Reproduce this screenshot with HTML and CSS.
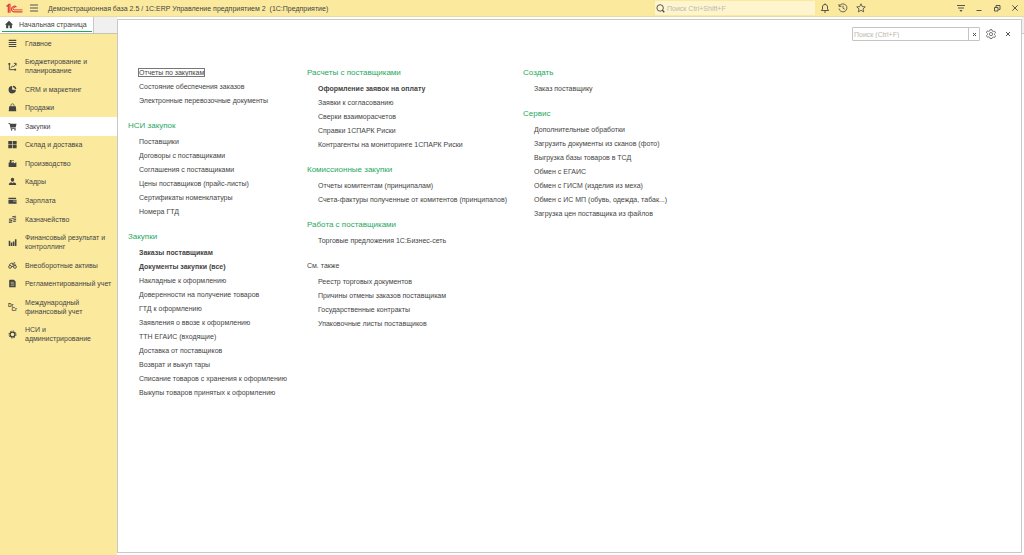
FILE: index.html
```html
<!DOCTYPE html>
<html lang="ru">
<head>
<meta charset="utf-8">
<title>1С:ERP Управление предприятием 2</title>
<link rel="stylesheet" href="styles.css">
</head>
<body>
<div class="app">
  <header class="titlebar">
    <svg class="logo" viewBox="0 0 16 10" fill="none" stroke="#e0403a" aria-label="1С"><path d="M.5 3.2 2.2 1.6V9M2.4 1.2h1.300V9" stroke-width="1.200"/><path d="M9.8 3.600A2.700 2.700 0 1 0 7.600 8.200H15.500" stroke-width="1.100"/><path d="M8.600 4.200A1.200 1.200 0 1 0 7.600 6.300H15.500" stroke-width=".9"/></svg>
    <button class="icon-btn menu-btn" aria-label="Меню"><svg viewBox="0 0 10 10" stroke="currentColor"><path d="M1 2h8M1 5h8M1 8h8"/></svg></button>
    <h1 class="title">Демонстрационная база 2.5 / 1С:ERP Управление предприятием 2&nbsp; (1С:Предприятие)</h1>
    <label class="global-search">
      <svg viewBox="0 0 10 10" fill="none" stroke="currentColor"><circle cx="4.6" cy="4.4" r="3.6"/><path d="m7 6.8 2.2 2.4" stroke-width="1.4"/></svg>
      <input type="text" placeholder="Поиск Ctrl+Shift+F" aria-label="Поиск">
    </label>
    <div class="tools">
      <button class="icon-btn" aria-label="Уведомления"><svg viewBox="0 0 10 10" fill="none" stroke="currentColor"><path d="M1.3 7.5h7.4L7.5 6V4C7.5 2.400 6.500 1.500 5 1.500S2.500 2.400 2.500 4v2zM5 .5v1M4 9h2"/></svg></button>
      <button class="icon-btn" aria-label="История"><svg viewBox="0 0 10 10" fill="none" stroke="currentColor" stroke-width=".9"><path d="M1.300 3.200A4 4 0 1 1 1 5.600M1 1v2.400h2.400M5 2.700V5.200L6.800 6.300"/></svg></button>
      <button class="icon-btn" aria-label="Избранное"><svg viewBox="0 0 10 10" fill="none" stroke="currentColor" stroke-width=".9"><path d="m5 .8 1.250 2.800 3 .3-2.250 2 .7 3L5 7.300 2.300 8.900l.7-3-2.250-2 3-.3z"/></svg></button>
    </div>
    <div class="window-tools">
      <button class="icon-btn" aria-label="Настройки окна"><svg viewBox="0 0 10 10" fill="currentColor"><path d="M1 2h8v1H1zM2 4.500h6v1H2zM3.300 7h3.400L5 9z"/></svg></button>
      <button class="icon-btn" aria-label="Свернуть"><svg viewBox="0 0 10 10" stroke="currentColor"><path d="M2.500 7.500h5"/></svg></button>
      <button class="icon-btn" aria-label="Восстановить"><svg viewBox="0 0 10 10" fill="none" stroke="currentColor"><path d="M2.500 4.500h3.500v3.500H2.500zM4 4V2.500h4V6.500H6.500"/></svg></button>
      <button class="icon-btn" aria-label="Закрыть"><svg viewBox="0 0 10 10" stroke="currentColor"><path d="m2.300 2.300 5.400 5.400M7.700 2.300 2.300 7.700"/></svg></button>
    </div>
  </header>

  <div class="workspace">
    <aside class="sidebar">
      <div class="tabs">
        <a class="tab" href="#"><svg class="home" viewBox="0 0 10 10" fill="currentColor"><path d="M5 .8 .5 5.200h1.300V9.200h2.400V6.200h1.600V9.200H8.200V5.200h1.300z"/></svg><span>Начальная страница</span></a>
      </div>
      <nav class="sections">
        <a href="#"><svg viewBox="0 0 10 10" stroke="currentColor" stroke-width="1.200"><path d="M.8 1.500h8.400M.8 3.800h8.400M.8 6.100h8.400M.8 8.400h8.400"/></svg><span>Главное</span></a>
        <a href="#"><svg viewBox="0 0 10 10" fill="none" stroke="currentColor"><path d="M1.500 2v6.500h6M3 6.500l2-2 1 1 3-3.500M6.500 1.500H9V4"/><path d="M.5 1h2v2h-2zM7 7.500h2v2H7z" fill="currentColor" stroke="none"/></svg><span>Бюджетирование и планирование</span></a>
        <a href="#"><svg viewBox="0 0 10 10" fill="currentColor"><path d="M4.600 1.200V5.400H8.800A4.100 4.100 0 1 1 4.600 1.200z"/><path d="M5.500.7A3.900 3.900 0 0 1 9.300 4.500H7.600A2.200 2.200 0 0 0 5.500 2.400z"/></svg><span>CRM и маркетинг</span></a>
        <a href="#"><svg viewBox="0 0 10 10" fill="currentColor"><path d="M1.300 3.500h7.400l.5 5.800H.8z"/><path d="M3.300 4.500V2.600a1.700 1.700 0 0 1 3.400 0v1.900" fill="none" stroke="currentColor" stroke-width=".8"/></svg><span>Продажи</span></a>
        <a class="current" href="#" aria-current="page"><svg viewBox="0 0 10 10" fill="currentColor"><path d="M.5 1h1.800l.4 1H9.500L8.500 6H3.600l.2.700h4.700v.8H3L1.700 1.900H.5z"/><circle cx="4" cy="8.700" r=".9"/><circle cx="7.800" cy="8.700" r=".9"/></svg><span>Закупки</span></a>
        <a href="#"><svg viewBox="0 0 10 10" fill="currentColor"><path d="M.3 1h4.300v3.700H.3zM5.300 1h4.300v3.700H5.300zM.3 5.400h4.300v3.700H.3zM5.300 5.400h4.300v3.700H5.300z"/></svg><span>Склад и доставка</span></a>
        <a href="#"><svg viewBox="0 0 10 10" fill="currentColor"><path d="M.7 9V4h1.300V1h2v3.500L6.500 3.300V5L9.300 3.500V9zM5 1h1.200v1.300H5z"/></svg><span>Производство</span></a>
        <a href="#"><svg viewBox="0 0 10 10" fill="currentColor"><ellipse cx="5" cy="3" rx="1.900" ry="2.300"/><path d="M1 9V7.500C1.300 6.300 3 6 3.700 5.700L5 7l1.300-1.300C7 6 8.700 6.300 9 7.500V9z"/></svg><span>Кадры</span></a>
        <a href="#"><svg viewBox="0 0 10 10" fill="currentColor"><path d="M.5 2h8.500v1.300H.5zM.5 4.200h9v4.300h-9z"/><path d="M5.500 5.700h4" stroke="#fbea9e" stroke-width=".7"/></svg><span>Зарплата</span></a>
        <a href="#"><svg viewBox="0 0 10 10" fill="currentColor"><path d="M4.800 1.500 9 .8v1L4.800 2.500zM4.800 3.300 9 2.600v1L4.800 4.300zM5.800 5 9 4.400v1L5.800 6zM5.800 6.700 9 6.100v1l-3.200.7zM1 4.300l3.800-.6v1.100L1 5.400zM1 6.100l3.800-.6v1.100L1 7.200zM1 7.900l3.800-.6v1.100L1 9z"/></svg><span>Казначейство</span></a>
        <a href="#"><svg viewBox="0 0 10 10" fill="currentColor"><path d="M.8 3h1.700v6H.8zM3.100 5h1.700v4H3.100zM5.400 4h1.700v5H5.400zM7.700 1.500h1.700V9H7.700z"/></svg><span>Финансовый результат и контроллинг</span></a>
        <a href="#"><svg viewBox="0 0 10 10" fill="none" stroke="currentColor"><circle cx="2.300" cy="6.500" r="1.600"/><circle cx="7.700" cy="6.500" r="1.600"/><path d="M1.300 4.300 3.500 2.500H5l.5 2H9M4 6h2M6.500 4V2H8"/></svg><span>Внеоборотные активы</span></a>
        <a href="#"><svg viewBox="0 0 10 10" fill="currentColor"><path d="M2 .8h4.500L8.500 2.800V9.300H1.300V1.500z"/><path d="M3 3.700h3.500M3 5.300h4M3 7h4" stroke="#fbea9e" stroke-width=".6"/></svg><span>Регламентированный учет</span></a>
        <a href="#"><span class="drcr" aria-hidden="true"><b>Dr</b><b>Cr</b></span><span>Международный финансовый учет</span></a>
        <a href="#"><svg viewBox="0 0 10 10" fill="none" stroke="currentColor"><circle cx="5" cy="5" r="2.700" stroke-width="1.500"/><circle cx="5" cy="5" r="3.900" stroke-dasharray="1.530" stroke-width="1.100"/></svg><span>НСИ и администрирование</span></a>
      </nav>
    </aside>

    <main class="panel">
      <div class="panel-tools">
        <div class="search">
          <input type="text" placeholder="Поиск (Ctrl+F)" aria-label="Поиск в разделе">
          <button aria-label="Очистить"><svg viewBox="0 0 10 10" stroke="currentColor" stroke-width="2"><path d="m2 2 6 6M8 2 2 8"/></svg></button>
        </div>
        <button class="icon-btn" aria-label="Настройки"><svg viewBox="0 0 10 10" fill="none" stroke="currentColor" stroke-width=".8"><path d="M4 .7h2l.3 1.400.9.500 1.400-.5 1 1.700-1.100 1v1l1.100 1-1 1.700-1.400-.5-.9.500L6 9.500H4l-.3-1.200-.9-.500-1.400.5-1-1.700 1.100-1v-1l-1.100-1 1-1.700 1.400.5.9-.500z"/><circle cx="5" cy="5.100" r="1.600"/></svg></button>
        <button class="icon-btn close-btn" aria-label="Закрыть раздел"><svg viewBox="0 0 10 10" stroke="currentColor"><path d="m3 3 4 4M7 3 3 7"/></svg></button>
      </div>
      <div class="columns">
        <div class="column">
          <section>
            <ul>
              <li><a class="focused" href="#">Отчеты по закупкам</a></li>
              <li><a href="#">Состояние обеспечения заказов</a></li>
              <li><a href="#">Электронные перевозочные документы</a></li>
            </ul>
          </section>
          <section>
            <h2>НСИ закупок</h2>
            <ul>
              <li><a href="#">Поставщики</a></li>
              <li><a href="#">Договоры с поставщиками</a></li>
              <li><a href="#">Соглашения с поставщиками</a></li>
              <li><a href="#">Цены поставщиков (прайс-листы)</a></li>
              <li><a href="#">Сертификаты номенклатуры</a></li>
              <li><a href="#">Номера ГТД</a></li>
            </ul>
          </section>
          <section>
            <h2>Закупки</h2>
            <ul>
              <li><a class="main-link" href="#">Заказы поставщикам</a></li>
              <li><a class="main-link" href="#">Документы закупки (все)</a></li>
              <li><a href="#">Накладные к оформлению</a></li>
              <li><a href="#">Доверенности на получение товаров</a></li>
              <li><a href="#">ГТД к оформлению</a></li>
              <li><a href="#">Заявления о ввозе к оформлению</a></li>
              <li><a href="#">ТТН ЕГАИС (входящие)</a></li>
              <li><a href="#">Доставка от поставщиков</a></li>
              <li><a href="#">Возврат и выкуп тары</a></li>
              <li><a href="#">Списание товаров с хранения к оформлению</a></li>
              <li><a href="#">Выкупы товаров принятых к оформлению</a></li>
            </ul>
          </section>
        </div>
        <div class="column">
          <section>
            <h2>Расчеты с поставщиками</h2>
            <ul>
              <li><a class="main-link" href="#">Оформление заявок на оплату</a></li>
              <li><a href="#">Заявки к согласованию</a></li>
              <li><a href="#">Сверки взаиморасчетов</a></li>
              <li><a href="#">Справки 1СПАРК Риски</a></li>
              <li><a href="#">Контрагенты на мониторинге 1СПАРК Риски</a></li>
            </ul>
          </section>
          <section>
            <h2>Комиссионные закупки</h2>
            <ul>
              <li><a href="#">Отчеты комитентам (принципалам)</a></li>
              <li><a href="#">Счета-фактуры полученные от комитентов (принципалов)</a></li>
            </ul>
          </section>
          <section>
            <h2>Работа с поставщиками</h2>
            <ul>
              <li><a href="#">Торговые предложения 1С:Бизнес-сеть</a></li>
            </ul>
          </section>
          <section>
            <h2 class="see-also">См. также</h2>
            <ul>
              <li><a href="#">Реестр торговых документов</a></li>
              <li><a href="#">Причины отмены заказов поставщикам</a></li>
              <li><a href="#">Государственные контракты</a></li>
              <li><a href="#">Упаковочные листы поставщиков</a></li>
            </ul>
          </section>
        </div>
        <div class="column">
          <section>
            <h2>Создать</h2>
            <ul>
              <li><a href="#">Заказ поставщику</a></li>
            </ul>
          </section>
          <section>
            <h2>Сервис</h2>
            <ul>
              <li><a href="#">Дополнительные обработки</a></li>
              <li><a href="#">Загрузить документы из сканов (фото)</a></li>
              <li><a href="#">Выгрузка базы товаров в ТСД</a></li>
              <li><a href="#">Обмен с ЕГАИС</a></li>
              <li><a href="#">Обмен с ГИСМ (изделия из меха)</a></li>
              <li><a href="#">Обмен с ИС МП (обувь, одежда, табак...)</a></li>
              <li><a href="#">Загрузка цен поставщика из файлов</a></li>
            </ul>
          </section>
        </div>
      </div>
    </main>
    <div class="edge"></div>
  </div>
</div>
</body>
</html>
```

FILE: styles.css
```css
* { box-sizing: border-box; }

body {
  margin: 0;
  font-family: "Liberation Sans", Arial, sans-serif;
  font-size: 7px;
  line-height: 9px;
  color: #444;
  background: #fff;
}

a { color: inherit; text-decoration: none; }
ul { margin: 0; padding: 0; list-style: none; }
h1, h2 { margin: 0; font-weight: normal; }
svg { display: block; flex: none; }
button { padding: 0; border: 0; background: none; color: #555; font: inherit; }
input { min-width: 0; padding: 0; border: 0; outline: 0; background: none; color: inherit; font: inherit; }
input::placeholder { color: #bcb8ac; opacity: 1; }

.app { display: flex; flex-direction: column; min-height: 100vh; }

/* Title bar */
.titlebar {
  display: flex;
  align-items: center;
  height: 17px;
  padding-left: 6px;
  background: #fbea9e;
  border-bottom: 1px solid #e5dbaa;
}
.logo { width: 17px; height: 11px; }
.icon-btn { display: grid; place-items: center; width: 18px; height: 14px; }
.icon-btn svg { width: 10px; height: 10px; }
.menu-btn { margin: 0 5px 0 2px; }
.title { flex: 1; font-size: 7px; line-height: 9px; white-space: nowrap; }
.global-search {
  display: flex;
  align-items: center;
  gap: 2px;
  width: 160px;
  height: 14px;
  padding-left: 1px;
  background: #fef5cf;
}
.global-search svg { width: 9px; height: 9px; }
.global-search input { flex: 1; }
.tools { display: flex; width: 137px; padding-left: 1px; }
.window-tools { display: flex; }

/* Workspace */
.workspace {
  flex: 1;
  display: grid;
  grid-template-columns: 117px 1fr 2px;
}
.sidebar { display: flex; flex-direction: column; background: #fbea9e; }
.tabs { height: 17px; background: #f0f0f0; border-bottom: 1px solid #c8c4b4; }
.tab {
  display: flex;
  align-items: center;
  gap: 5px;
  width: 94px;
  height: 16px;
  padding: 0 0 2px 4px;
  background: linear-gradient(#1fa862, #1fa862) 2px 14px / 90px 1px no-repeat #fff;
  border-right: 1px solid #c8c8c8;
  white-space: nowrap;
}
.home { width: 10px; height: 9px; }

.sections { display: flex; flex-direction: column; height: 314px; }
.sections a {
  flex: 1 0 auto;
  display: flex;
  align-items: center;
  gap: 8px;
  padding: 4px 4px 4px 8px;
}
.sections svg { width: 9px; height: 9px; }
.sections .current { background: #fff; }
.drcr {
  flex: none;
  display: flex;
  flex-direction: column;
  width: 9px;
  font-size: 5px;
  line-height: 4px;
}
.drcr b:last-child { text-align: right; }

/* Section panel */
.panel {
  margin: 2px 0;
  background: #fff;
  border: 1px solid #c8c8c8;
}
.panel-tools {
  display: flex;
  justify-content: flex-end;
  align-items: center;
  padding: 7px 5px 0 0;
}
.search {
  display: flex;
  width: 128px;
  height: 14px;
  margin-right: 2px;
  border: 1px solid #c4c4c4;
  border-radius: 1px;
}
.search input { flex: 1; padding-left: 1px; }
.search button {
  display: grid;
  place-items: center;
  width: 11px;
  border-left: 1px solid #c4c4c4;
}
.search svg { width: 5px; height: 5px; }
.close-btn { width: 16px; }

.columns {
  display: grid;
  grid-template-columns: 179px 216px 1fr;
  padding: 25px 10px 12px;
}
.column section + section { margin-top: 11px; }
.column h2 {
  margin-bottom: 2px;
  font-size: 8px;
  line-height: 14px;
  color: #1fa862;
}
.column .see-also { font-size: 7px; color: #444; }
.column ul { padding-left: 11px; line-height: 14px; white-space: nowrap; }
.main-link { font-weight: bold; }
.focused { outline: 1px solid #777; }

.edge { background: linear-gradient(#f0f0f0 16px, #c8c8c8 16px, #c8c8c8 17px, #fff 17px); }
```
